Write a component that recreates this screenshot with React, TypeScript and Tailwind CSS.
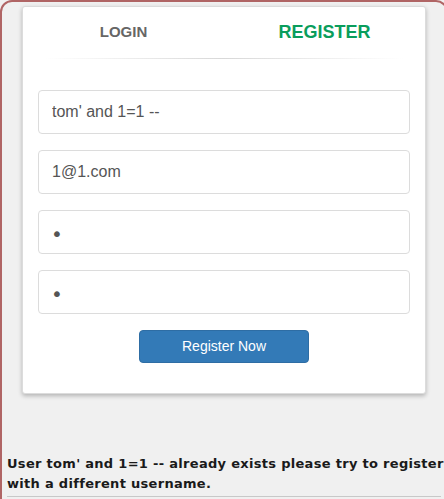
import React from 'react';

const fields = [
  { type: 'text', value: "tom' and 1=1 --" },
  { type: 'email', value: '1@1.com' },
  { type: 'password', value: 'a' },
  { type: 'password', value: 'a' },
];

export default function App() {
  return (
    <div className="w-[444px] h-[499px] overflow-hidden bg-[#f0f0f0] font-['Liberation_Sans',Arial,sans-serif]">
      <div className="w-[448px] h-[520px] border-2 border-[#b06565] rounded-[12px] bg-[#f0f0f0]">
        <div className="mt-[4px] ml-[20px] w-[404px] bg-white border border-[#dcdcdc] rounded-[3px] shadow-[0_2px_4px_rgba(0,0,0,0.25)]">
          <div className="flex h-[51px]">
            <div className="flex-1 flex items-center justify-center text-[15px] font-bold text-[#666]">
              LOGIN
            </div>
            <div className="flex-1 flex items-center justify-center text-[18px] font-bold text-[#0a9d5c]">
              REGISTER
            </div>
          </div>
          <div className="mx-[22px] h-px bg-gradient-to-r from-transparent via-[#d8d8d8] to-transparent" />
          <form className="px-[15px] pt-[31px] pb-[30px] flex flex-col gap-[16px]">
            {fields.map((f, i) => (
              <input
                key={i}
                type={f.type}
                defaultValue={f.value}
                readOnly
                className={
                  f.type === 'password'
                    ? "h-[44px] w-full border border-[#dcdcdc] rounded-[4px] px-[12px] pt-[3px] text-[20px] text-[#555] outline-none font-['DejaVu_Sans',sans-serif]"
                    : 'h-[44px] w-full border border-[#dcdcdc] rounded-[4px] px-[13px] text-[16px] text-[#555] outline-none'
                }
              />
            ))}
            <div className="flex justify-center">
              <button
                type="button"
                className="w-[170px] h-[33px] bg-[#337ab7] border border-[#2e6da4] rounded-[4px] text-white text-[14px]"
              >
                Register Now
              </button>
            </div>
          </form>
        </div>
        <div className="mt-[60px] pl-[5px] whitespace-nowrap text-[13px] font-bold leading-[20px] tracking-[0.3px] text-[#1a1a1a] font-['DejaVu_Sans',Verdana,sans-serif]">
          User tom' and 1=1 -- already exists please try to register
          <br />
          with a different username.
        </div>
        <div className="ml-[5px] mr-[5px] mt-[2px] h-px bg-[#c8c8c8]" />
      </div>
    </div>
  );
}
